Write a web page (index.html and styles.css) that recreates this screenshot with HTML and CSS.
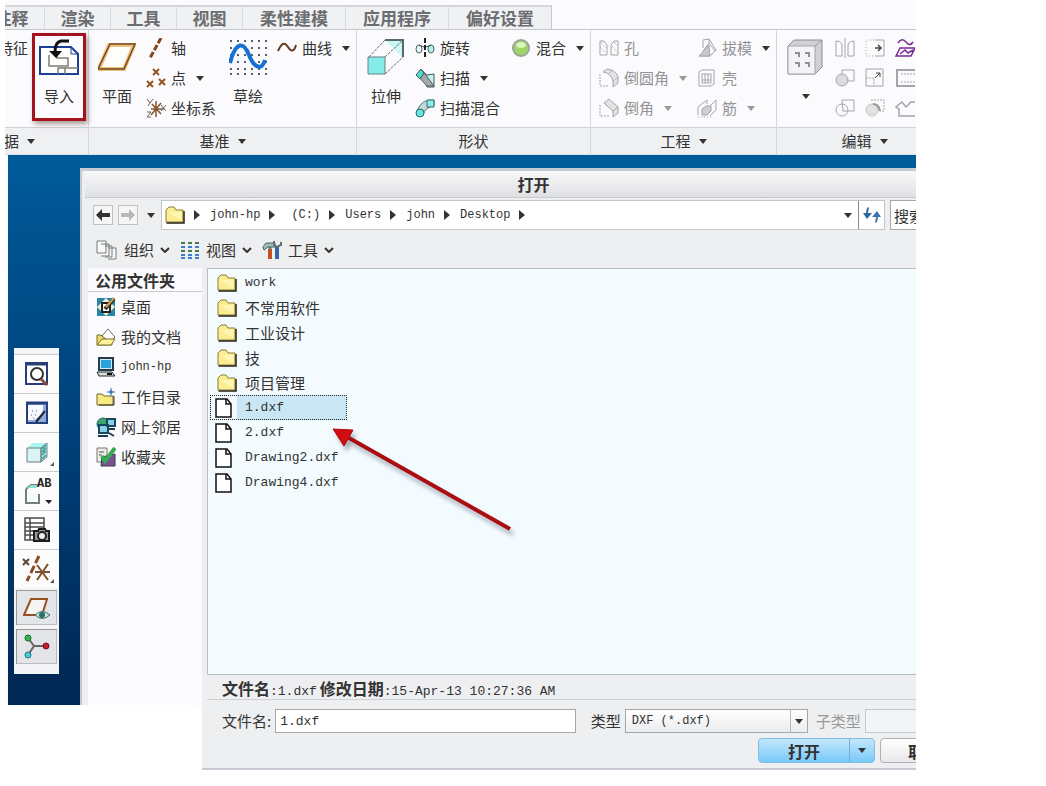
FILE: index.html
```html
<!DOCTYPE html>
<html lang="zh-CN">
<head>
<meta charset="utf-8">
<title>打开</title>
<link rel="stylesheet" href="styles.css">
</head>
<body>
<svg class="defs" aria-hidden="true">
  <symbol id="caret" viewBox="0 0 8 5"><path d="M0 0h8L4 5z" fill="currentColor"/></symbol>
  <symbol id="right" viewBox="0 0 6 10"><path d="M0 0l6 5-6 5z" fill="currentColor"/></symbol>
  <symbol id="chevron" viewBox="0 0 10 6"><path d="M1 1l4 4 4-4" fill="none" stroke="currentColor" stroke-width="2"/></symbol>
  <symbol id="folder" viewBox="0 0 20 18"><path d="M1 4l3-3h5l2 3h7v12H1z" fill="#fbed91" stroke="#8d7b34"/><path d="M3 6h13v8z" fill="#fff6b4"/><path d="M1.500 17h17.500V5" fill="none" stroke="#252214" stroke-width="1.500"/></symbol>
  <symbol id="file" viewBox="0 0 18 20"><path d="M1 1h11l4 5v13H1z" fill="#fff" stroke="#111" stroke-width="1.500"/><path d="M11 1v5h5" fill="none" stroke="#111" stroke-width="1.500"/></symbol>
</svg>
<div class="app">
  <nav class="tabs">
    <button>注释</button><button>渲染</button><button>工具</button><button>视图</button><button class="wide">柔性建模</button><button class="wide">应用程序</button><button class="wide">偏好设置</button>
  </nav>
  <div class="ribbon">
    <section class="group group-data">
      <div class="group-body">
        <button class="cmd">特征</button>
        <button class="big marked">
          <svg width="40" height="38" viewBox="0 0 40 38"><path d="M1 8h31l7 7v20H1z" fill="#fff" stroke="#1c3f96" stroke-width="2"/><path d="M32 8v7h7" fill="none" stroke="#1c3f96"/><path d="M10 16v11h19v-8H18v-3M19 35v-6h20M26 29v6" fill="none" stroke="#807c74" stroke-width="1.500"/><path d="M30 2H22q-6 1-6 11" fill="none" stroke="#111" stroke-width="3"/><path d="M10 12h13l-6 7z" fill="#111"/></svg>
          <span>导入</span>
        </button>
      </div>
      <h2>数据 <svg class="caret"><use href="#caret"/></svg></h2>
    </section>
    <section class="group group-datum">
      <div class="group-body">
        <button class="big">
          <svg width="38" height="38" viewBox="0 0 38 38"><path d="M11 6h25L26 30H1z" fill="#fdfdfb" stroke="#efbf7c" stroke-width="4"/><path d="M12 5h25L26 30H0z" fill="none" stroke="#6e4a20" stroke-width="1.500"/></svg>
          <span>平面</span>
        </button>
        <div class="stack">
          <button class="cmd"><svg width="20" height="20"><path d="M15 0L4 20" stroke="#84451c" stroke-width="3" stroke-dasharray="6 2"/></svg><span>轴</span></button>
          <button class="cmd"><svg width="20" height="20"><path d="M7 1l6 6m0-6l-6 6M1 13l6 6m0-6l-6 6M13 11l6 6m0-6l-6 6" stroke="#99521c" stroke-width="2"/></svg><span>点</span><svg class="caret"><use href="#caret"/></svg></button>
          <button class="cmd"><svg width="20" height="20"><path d="M5 11h13M10 3v16M6 6l9 10M15 5L5 17" stroke="#84552b" stroke-width="1.500"/><path d="M1 1l3 4 3-4M4 5L2 8M15 7l5 6m0-6l-5 6M1 14h4l-4 5h4" fill="none" stroke="#66625d"/></svg><span>坐标系</span></button>
        </div>
        <button class="big">
          <svg width="38" height="38" viewBox="0 0 38 38"><path d="M1 2h37M1 9h37M1 16h37M1 23h37M1 30h37M1 35h37" stroke="#52616e" stroke-width="2" stroke-dasharray="2 5"/><path d="M1 24C7 1 15 3 20 16s13 16 16 5" fill="none" stroke="#176fd4" stroke-width="4"/></svg>
          <span>草绘</span>
        </button>
        <div class="stack">
          <button class="cmd"><svg width="20" height="20"><path d="M1 13C5 4 8 4 11 9s6 5 8-2" fill="none" stroke="#633d20" stroke-width="2"/></svg><span>曲线</span><svg class="caret"><use href="#caret"/></svg></button>
        </div>
      </div>
      <h2>基准 <svg class="caret"><use href="#caret"/></svg></h2>
    </section>
    <section class="group group-shape">
      <div class="group-body">
        <button class="big">
          <svg width="38" height="38" viewBox="0 0 38 38"><path d="M18 1h18v18z" fill="#c9f7f6"/><path d="M2 18L18 1M18 18L36 1M18 35l18-17" fill="none" stroke="#60706e" stroke-dasharray="3 1"/><path d="M18 1h18v17" fill="none" stroke="#5a6967" stroke-width="2"/><path d="M1 18h17v17H1z" fill="#85ecea" stroke="#648180"/></svg>
          <span>拉伸</span>
        </button>
        <div class="stack">
          <button class="cmd"><svg width="20" height="20"><path d="M10 0v20" stroke="#222" stroke-width="2" stroke-dasharray="5 2"/><ellipse cx="4" cy="11" rx="3" ry="4" fill="#e2f9f8" stroke="#4d6260"/><ellipse cx="16" cy="11" rx="3" ry="4" fill="#aef1ef" stroke="#4d6260"/><path d="M4 7l5 2m7-2l-5 2" stroke="#444"/></svg><span>旋转</span></button>
          <button class="cmd"><svg width="20" height="20"><path d="M7 3l5 4 7-1v13H12z" fill="#c8f3f1" stroke="#3d5556"/><path d="M2 7l5-5 12 16h-7z" fill="#a3abaa" stroke="#4c5a59"/><path d="M1 7l5-6 3 4-4 6z" fill="#55d8d5" stroke="#3d5556"/></svg><span>扫描</span><svg class="caret"><use href="#caret"/></svg></button>
          <button class="cmd"><svg width="20" height="20"><path d="M2 13Q6 1 19 2v6q-9 1-11 9z" fill="#c4d7d7" stroke="#5b7373"/><circle cx="5" cy="15" r="4" fill="#69e3e3" stroke="#28696c"/><path d="M12 2h7v7h-7z" fill="#8cecea" stroke="#306f72"/></svg><span>扫描混合</span></button>
        </div>
        <div class="stack">
          <button class="cmd"><svg width="20" height="20"><circle cx="10" cy="10" r="8" fill="#9fd568" stroke="#9ba39a" stroke-width="2"/><ellipse cx="10" cy="7" rx="5" ry="3" fill="#d9f4bd"/></svg><span>混合</span><svg class="caret"><use href="#caret"/></svg></button>
        </div>
      </div>
      <h2>形状</h2>
    </section>
    <section class="group group-eng">
      <div class="group-body">
        <div class="stack off">
          <button class="cmd"><svg class="line" width="20" height="20"><path d="M1 3h4l3 4v10H1zM19 3h-4l-3 4v10h7z"/><path d="M1 9l6 6M2 4l5 6M13 8l6 7M15 4l4 4" stroke-dasharray="1 1"/></svg><span>孔</span></button>
          <button class="cmd"><svg class="line" width="20" height="20"><path d="M4 4l4-3q9 1 11 8v6l-5 4v-6Q12 5 4 4z" fill="#e3e3e5"/><path d="M14 13l5-4M10 5l4-3M1 6v12h9" stroke-dasharray="2 1"/></svg><span>倒圆角</span><svg class="caret"><use href="#caret"/></svg></button>
          <button class="cmd"><svg class="line" width="20" height="20"><path d="M5 5l5-4 9 8v6l-5 4v-6z" fill="#e3e3e5"/><path d="M14 13l5-4"/><path d="M1 7v11h9" stroke-dasharray="2 1"/></svg><span>倒角</span><svg class="caret"><use href="#caret"/></svg></button>
        </div>
        <div class="stack off">
          <button class="cmd"><svg class="line" width="20" height="20"><path d="M6 2l6-1 7 11-6 6H2M6 2v8M12 5l6 8M12 5l-6 8M12 5V1"/><path d="M2 18l10-11 1 11z" fill="#c9c9cc"/></svg><span>拔模</span><svg class="caret dark"><use href="#caret"/></svg></button>
          <button class="cmd"><svg class="line" width="20" height="20"><path d="M2 4l3-2h12v14l-3 2H2z"/><path d="M5 6h9v9H5zM8 6v9M11 6v9M5 12h9"/></svg><span>壳</span></button>
          <button class="cmd"><svg class="line" width="20" height="20"><path d="M1 17V9l9-7v4M13 8l6-6v10l-6 6"/><path d="M5 17v-6l4-3h5v5l-4 4z" fill="#cfcfd1"/><path d="M1 19h13" stroke-dasharray="1 2"/></svg><span>筋</span><svg class="caret"><use href="#caret"/></svg></button>
        </div>
      </div>
      <h2>工程 <svg class="caret"><use href="#caret"/></svg></h2>
    </section>
    <section class="group group-edit">
      <div class="group-body">
        <button class="big" aria-label="阵列">
          <svg width="38" height="38" viewBox="0 0 38 38"><path d="M1 7l6-6h28v27l-7 7H1z" fill="#d0d1d4" stroke="#898b8e"/><path d="M1 7h27v28H1z" fill="#f4f4f6" stroke="#a5a6a9"/><path d="M28 7l7-6" stroke="#999"/><path d="M8 14h4v4m6-4h4v4M8 24h4v4m6-4h4v4" fill="none" stroke="#8f9093" stroke-width="2"/></svg>
          <svg class="caret pattern-caret"><use href="#caret"/></svg>
        </button>
        <div class="tools">
          <button aria-label="镜像"><svg class="line" width="20" height="20"><path d="M10 0v20M1 3q6 0 6 5v10H1zM19 3q-6 0-6 5v10h6z"/></svg></button>
          <button aria-label="延伸"><svg class="line" width="20" height="20"><path d="M10 2h9v16h-9"/><path d="M9 2H1v16h8" stroke-dasharray="1 2"/><path d="M10 10h6m-3-3l3 3-3 3" stroke="#444" stroke-width="1.500"/></svg></button>
          <button aria-label="投影"><svg width="20" height="20" fill="none" stroke="#7a2a91" stroke-width="1.500"><path d="M3 5q4-6 8-1t7 0M1 18l4-8h15l-4 8zM5 16l5-4 3 3 5-3"/></svg></button>
          <button aria-label="合并"><svg class="line" width="20" height="20"><circle cx="7" cy="12" r="6" fill="#dcdcde"/><path d="M7 6V2h12v11h-6"/></svg></button>
          <button aria-label="偏移"><svg class="line" width="20" height="20"><path d="M1 1h17v17H1z"/><path d="M1 10h8v8" stroke-dasharray="2 1"/><path d="M10 10l5-5m-4 0h4v4" stroke="#444"/></svg></button>
          <button aria-label="加厚"><svg class="line" width="20" height="20"><path d="M20 2H2v16h18" stroke-width="2"/><path d="M6 6h14M6 14h14" stroke-dasharray="2 1"/></svg></button>
          <button aria-label="相交"><svg class="line" width="20" height="20"><circle cx="7" cy="12" r="6"/><path d="M7 2h12v11H8z"/></svg></button>
          <button aria-label="修剪"><svg class="line" width="20" height="20"><circle cx="7" cy="12" r="6" fill="#e2e2e4" stroke="#c6c6c8"/><path d="M6 2h13v11h-4M8 6q5 1 6 7" stroke-dasharray="2 1"/><path d="M8 6q6 0 7 7" stroke="#999" stroke-width="2"/></svg></button>
          <button aria-label="填充"><svg class="line" width="20" height="20"><path d="M20 4h-4l-5 5-4-5-6 5 3 2v7h16" stroke-width="1.500"/></svg></button>
        </div>
      </div>
      <h2>编辑 <svg class="caret"><use href="#caret"/></svg></h2>
    </section>
  </div>

  <main class="workspace">
    <aside class="rail">
      <div class="toolbox">
        <button aria-label="缩放"><svg width="26" height="26"><path d="M2 2h21v21H2z" fill="#fff" stroke="#263e76" stroke-width="2"/><path d="M1 3h23" stroke="#263e76" stroke-width="3"/><circle cx="13" cy="13" r="6" fill="#fff" stroke="#333" stroke-width="2"/><path d="M17 18l6 6" stroke="#8c5041" stroke-width="3"/></svg></button>
        <button aria-label="重画"><svg width="26" height="26"><path d="M3 3h20v20H3z" fill="#8facd9" stroke="#243f7b" stroke-width="2"/><path d="M4 5h15q2 9-9 15H4z" fill="#f6f9ff"/><path d="M2 3h22" stroke="#243f7b" stroke-width="3"/><path d="M12 22l5-6 4-5" stroke="#223" stroke-width="2"/><path d="M7 15h8M8 11h8M9 18h4" stroke="#567" stroke-dasharray="1 3"/></svg></button>
        <button class="more" aria-label="显示样式"><svg width="26" height="26"><path d="M3 9l6-5h14l-5 6H3z" fill="#abf4ef"/><path d="M3 9h14v14H3zM17 9l6-5v14l-6 5z" fill="#d9f4f3" stroke="#69807f"/><path d="M18 10l4-4M18 13l4-4M18 16l4-4M18 20l4-4" stroke="#48aaa8" stroke-width="2"/></svg></button>
        <button aria-label="注释显示"><svg width="32" height="30"><path d="M5 13l5-4h7M5 13v14h13v-9" fill="none" stroke="#71827e" stroke-width="2"/><path d="M6 12l4-3h7l-2 3z" fill="#8be1d7"/><text x="16" y="11" class="ab">AB</text><path d="M24 24h7l-3 4z" fill="#222"/></svg></button>
        <button aria-label="视图管理器"><svg width="28" height="28"><path d="M2 2h19v22H2zM7 2v22M2 7h19M2 11h19M2 15h19M2 19h19" fill="#fff" stroke="#494949" stroke-width="1.500"/><path d="M11 15h4l1-2h6l1 2h3v10H11z" fill="#9b9d9c" stroke="#1d1d1d" stroke-width="2"/><circle cx="19" cy="20" r="4" fill="#eee" stroke="#222" stroke-width="2"/></svg></button>
        <button class="more" aria-label="基准显示"><svg width="30" height="28"><path d="M1 4l6 6m0-6l-6 6" stroke="#5e4631" stroke-width="2"/><path d="M17 1L5 26" stroke="#8b4f24" stroke-width="3" stroke-dasharray="8 3"/><path d="M13 17h15M15 10l11 15M26 9L15 25" stroke="#7b512c" stroke-width="2"/></svg></button>
        <button class="pressed" aria-label="平面显示"><svg width="28" height="26"><path d="M8 4h16l-5 16H1z" fill="#f5f5f6" stroke="#965022" stroke-width="2"/><path d="M12 20q7-7 15 0-8 7-15 0" fill="#c9e3dd" stroke="#496a65"/><circle cx="19" cy="20" r="3" fill="#287369"/></svg></button>
        <button class="pressed" aria-label="旋转中心"><svg width="28" height="26"><path d="M5 4l6 8-6 9M11 12h12" fill="none" stroke="#666" stroke-width="2"/><circle cx="5" cy="4" r="3" fill="#31b84e" stroke="#176c2b"/><circle cx="23" cy="12" r="3" fill="#c51f2c" stroke="#701019"/><circle cx="5" cy="21" r="3" fill="#43cde1" stroke="#217383"/></svg></button>
      </div>
    </aside>
    <section class="dialog">
      <h1>打开</h1>
      <div class="nav">
        <button class="step" aria-label="后退"><svg width="14" height="12"><path d="M0 6l6-6v4h8v4H6v4z" fill="#333"/></svg></button>
        <button class="step" aria-label="前进"><svg width="14" height="12"><path d="M14 6L8 0v4H0v4h8v4z" fill="#b7b8b9"/></svg></button>
        <button class="history" aria-label="历史"><svg class="caret"><use href="#caret"/></svg></button>
        <div class="path">
          <svg width="20" height="18"><use href="#folder"/></svg>
          <svg class="right"><use href="#right"/></svg><a href="#">john-hp</a>
          <svg class="right"><use href="#right"/></svg><a class="drive" href="#">(C:)</a>
          <svg class="right"><use href="#right"/></svg><a href="#">Users</a>
          <svg class="right"><use href="#right"/></svg><a href="#">john</a>
          <svg class="right"><use href="#right"/></svg><a href="#">Desktop</a>
          <svg class="right"><use href="#right"/></svg>
          <button class="drop" aria-label="路径"><svg class="caret"><use href="#caret"/></svg></button>
          <button class="refresh" aria-label="刷新"><svg width="18" height="16"><path d="M6 0L5 6h4l-5 6-4-6h3l1-5z" fill="#2c679f"/><path d="M12 16l1-6H9l5-6 4 6h-3l-1 5z" fill="#3974ab"/></svg></button>
        </div>
        <input class="search" type="text" placeholder="搜索" aria-label="搜索">
      </div>
      <div class="toolbar">
        <button><svg width="22" height="20"><path d="M1 1h9v12H1zM5 4h8v12H5M9 6h7v11H9M12 8h8v11h-8" fill="#f8f8f8" stroke="#777a7b"/></svg>组织<svg class="chevron"><use href="#chevron"/></svg></button>
        <button><svg width="20" height="18" fill="none" stroke-width="2"><path d="M1 2h4M8 2h4M15 2h4M1 10h4M8 10h4M15 10h4" stroke="#4e7452"/><path d="M1 6h4M8 6h4M15 6h4M1 14h4M8 14h4M15 14h4M1 17h4M8 17h4M15 17h4" stroke="#3d7ed0"/></svg>视图<svg class="chevron"><use href="#chevron"/></svg></button>
        <button><svg width="20" height="20"><path d="M8 5v4" stroke="#6b8583" stroke-width="3"/><path d="M8 9v10" stroke="#c94f25" stroke-width="4"/><path d="M1 7l3-4h9v4H6l-4 3z" fill="#9fbdbb" stroke="#4b6261"/><path d="M15 7v12" stroke="#3268a8" stroke-width="4"/><path d="M12 1v4l3 2 4-2V2" fill="none" stroke="#597374" stroke-width="2"/></svg>工具<svg class="chevron"><use href="#chevron"/></svg></button>
      </div>
      <div class="content">
        <nav class="places">
          <h2>公用文件夹</h2>
          <a href="#"><svg width="20" height="20"><path d="M1 1h18v18H1z" fill="#2785a6"/><path d="M1 10l9-9 9 9-9 9z" fill="#e9efcf"/><path d="M6 6h8v9H6z" fill="#fff" stroke="#222" stroke-width="2"/><path d="M9 12L18 2" stroke="#333" stroke-width="4"/><path d="M10 10l8-9" stroke="#d8a04c" stroke-width="2"/></svg>桌面</a>
          <a href="#"><svg width="20" height="20"><path d="M1 18V8h4l2 2h9v8z" fill="#eada65" stroke="#786c2c"/><path d="M6 9l6-7 7 8-5 5z" fill="#fff" stroke="#6d6b61"/><path d="M1 18l5-6h13l-4 6z" fill="#fff29a" stroke="#78702d"/></svg>我的文档</a>
          <a href="#"><svg width="20" height="20"><path d="M3 1h14v12H3z" fill="#d4e7ee" stroke="#233b51" stroke-width="2"/><path d="M5 3h10v8H5z" fill="#2ba1df"/><path d="M1 15h15l3 4H3z" fill="#d9dcd9" stroke="#252a2d"/><path d="M11 17h5" stroke="#111" stroke-width="2"/></svg><span class="mono">john-hp</span></a>
          <a href="#"><svg width="20" height="20"><path d="M1 7h5l2 2h9v9H1z" fill="#f7e984" stroke="#70652b"/><path d="M18 9v9H3" fill="none" stroke="#39331c"/><path d="M15 0l1 4 4 1-4 1-1 4-1-4-4-1 4-1z" fill="#3a78bd"/></svg>工作目录</a>
          <a href="#"><svg width="20" height="20"><circle cx="7" cy="7" r="6" fill="#3ca56b" stroke="#205f70"/><path d="M11 2h8v7h-8zM3 8h9v8H3z" fill="#88cee5" stroke="#18455f" stroke-width="2"/><path d="M2 19h10M13 12h6M13 16l5 3" stroke="#183c54" stroke-width="2"/></svg>网上邻居</a>
          <a href="#"><svg width="20" height="20"><path d="M1 1h10v14H1z" fill="#eeeee9" stroke="#777"/><path d="M6 10l13-3v12H5z" fill="#77548f" stroke="#403644"/><path d="M19 1L9 14l-3-5" fill="none" stroke="#34aa55" stroke-width="4"/><path d="M3 5h5M3 8h3" stroke="#555"/></svg>收藏夹</a>
        </nav>
        <div class="browser">
          <div class="files">
            <ul>
              <li><button><svg class="type"><use href="#folder"/></svg><span class="mono">work</span></button></li>
              <li><button><svg class="type"><use href="#folder"/></svg><span>不常用软件</span></button></li>
              <li><button><svg class="type"><use href="#folder"/></svg><span>工业设计</span></button></li>
              <li><button><svg class="type"><use href="#folder"/></svg><span>技</span></button></li>
              <li><button><svg class="type"><use href="#folder"/></svg><span>项目管理</span></button></li>
              <li><button class="doc selected"><svg class="type"><use href="#file"/></svg><span class="mono">1.dxf</span></button></li>
              <li><button class="doc"><svg class="type"><use href="#file"/></svg><span class="mono">2.dxf</span></button></li>
              <li><button class="doc"><svg class="type"><use href="#file"/></svg><span class="mono">Drawing2.dxf</span></button></li>
              <li><button class="doc"><svg class="type"><use href="#file"/></svg><span class="mono">Drawing4.dxf</span></button></li>
            </ul>
            <svg class="pointer" width="190" height="116" viewBox="0 0 190 116"><path d="M14 10L182 105" stroke="#a90f12" stroke-width="4"/><path d="M5 5l20 1-9 16z" fill="#d20d10" stroke="#b00d10"/></svg>
          </div>
          <p class="status"><b>文件名</b><span class="mono">:1.dxf</span> <b>修改日期</b><span class="mono">:15-Apr-13 10:27:36 AM</span></p>
          <form class="form">
            <div class="fields">
              <label for="name">文件名:</label><input id="name" class="name" type="text" value="1.dxf">
              <label for="type">类型</label>
              <div class="select"><select id="type"><option>DXF (*.dxf)</option></select><i><svg class="caret"><use href="#caret"/></svg></i></div>
              <label class="dim" for="subtype">子类型</label><input id="subtype" class="subtype" type="text" disabled>
            </div>
            <div class="actions">
              <div class="split"><button type="button">打开</button><button type="button" class="split-drop" aria-label="打开选项"><svg class="caret"><use href="#caret"/></svg></button></div>
              <button type="button" class="cancel">取消</button>
            </div>
          </form>
        </div>
      </div>
    </section>
    <div class="blank"></div>
  </main>
</div>
</body>
</html>
```
FILE: styles.css
```css
* { box-sizing: border-box; }
body { margin: 0; background: #fff; color: #333; font: 15px/20px "Noto Sans CJK SC", sans-serif; }
button { display: flex; align-items: center; margin: 0; padding: 0; border: 0; background: none; color: inherit; font: inherit; white-space: nowrap; }
input, select { min-width: 0; margin: 0; border: 1px solid #a5a8ab; border-radius: 0; background: #fff; color: #333; font: 12px "Liberation Mono", "Noto Sans CJK SC", monospace; }
a { color: inherit; text-decoration: none; }
h1, h2, p, ul { margin: 0; padding: 0; font: inherit; list-style: none; }
svg { flex: none; display: block; }
.defs { position: absolute; width: 0; height: 0; }
.mono { font-family: "Liberation Mono", monospace; font-size: 13px; }
.caret { width: 8px; height: 5px; color: #333; }
.right { width: 6px; height: 10px; color: #333; }
.chevron { width: 10px; height: 6px; color: #333; }

.app { margin: 0 130px 0 5px; overflow: hidden; background: #fbfbfd; }
.tabs { display: flex; padding-top: 5px; border-bottom: 1px solid #c5c7c9; }
.tabs button { flex: none; justify-content: center; width: 66px; height: 24px; border-top: 2px solid #d5d6d8; border-right: 1px solid #d8d9db; background: #f0f1f3; color: #6b6d70; font-size: 17px; line-height: 20px; font-weight: bold; }
.tabs button:first-child { margin-left: -26px; }
.tabs .wide { width: 103px; }
.tabs .wide:last-child { border-right-color: #c5c7c9; }

.ribbon { display: flex; border-bottom: 1px solid #d9e5ed; }
.group { flex: none; border-right: 1px solid #d5d6d8; }
.group-body { display: grid; gap: 10px; height: 97px; padding: 3px 0 0 9px; }
.group > h2 { display: flex; align-items: center; justify-content: center; gap: 8px; height: 27px; border-top: 1px solid #cfd1d3; background: #eff0f2; }
.group-data { width: 153px; margin-left: -69px; }
.group-data .group-body { display: flex; justify-content: flex-end; align-items: flex-start; gap: 4px; padding-right: 2px; }
.group-datum { width: 268px; }
.group-datum .group-body { grid-template-columns: 38px 73px 38px 1fr; }
.group-shape { width: 234px; }
.group-shape .group-body { grid-template-columns: 38px 86px 1fr; padding-left: 10px; }
.group-eng { width: 186px; }
.group-eng .group-body { grid-template-columns: 88px 1fr; padding-left: 8px; }
.group-edit { width: 176px; }
.group-edit .group-body { grid-template-columns: 38px 1fr; padding-left: 10px; }
.cmd { gap: 5px; height: 30px; }
.cmd .caret { margin-left: 5px; }
.off { color: #929496; }
.off .caret { color: #999; }
.off .caret.dark { color: #333; }
.line { fill: none; stroke: #a4a5a8; }
.big { flex-direction: column; align-self: start; gap: 9px; height: 88px; padding-top: 6px; }
.marked { width: 54px; border: 3px solid #a3131b; padding-top: 3px; box-shadow: 2px 3px 5px #a99; }
.pattern-caret { margin-top: 8px; }
.tools { display: grid; grid-template-columns: repeat(3, 20px); grid-auto-rows: 30px; column-gap: 10px; }

.workspace { position: relative; display: flex; padding-left: 3px; }
.rail { flex: none; width: 72px; padding: 193px 0 0 6px; background: linear-gradient(#005b99, #00407a 45%, #002956 85%); }
.toolbox { width: 45px; padding: 6px 0 8px; background: #f3f5f8; }
.toolbox button { position: relative; justify-content: center; width: 45px; height: 39px; border-top: 1px solid #c9cccf; background: #fcfcfd; }
.more::after { content: ""; position: absolute; right: 5px; bottom: 5px; border: 2px solid #555; border-top-color: transparent; border-left-color: transparent; }
.toolbox .pressed { border: 2px solid #f4f4f6; background: #e4e5e8; box-shadow: inset 1px 1px #999, inset -1px -1px #bbb; }
.ab { font: bold 12px "Liberation Mono", monospace; fill: #222; }

.dialog { flex: none; display: flex; flex-direction: column; width: calc(100% - 6px); margin-top: 13px; border: solid #c6cbd3; border-width: 3px 0 2px 2px; background: #eeeff1; }
.workspace::before { content: ""; position: absolute; left: 75px; right: 0; top: 0; height: 13px; background: #005b99; }
.dialog > h1 { height: 27px; border-bottom: 1px solid #c7c9cc; background: linear-gradient(#f8f8f9, #dfe0e2); font-size: 16px; line-height: 26px; font-weight: bold; text-align: center; margin-left: 3px; }
.nav { display: flex; align-items: center; gap: 5px; padding: 0 14px 0 11px; height: 34px; }
.step { justify-content: center; width: 20px; height: 20px; border: 1px solid #bfc1c4; background: #f6f6f7; }
.step + .step { margin-right: 2px; }
.history { justify-content: center; width: 11px; }
.path { flex: 1; display: flex; align-items: center; height: 30px; padding-left: 3px; border: 1px solid #c2c4c7; background: #fff; font-family: "Liberation Mono", monospace; font-size: 12px; }
.path .right { margin: 0 10px 0 9px; }
.path .drive { margin-left: 6px; }
.drop { justify-content: center; width: 20px; height: 28px; margin-left: auto; }
.refresh { justify-content: center; width: 26px; height: 28px; border-left: 1px solid #888; }
.search { width: 78px; height: 30px; padding: 0 3px; font: 15px "Noto Sans CJK SC", sans-serif; }
.search::placeholder { color: #333; opacity: 1; }
.toolbar { display: flex; align-items: center; gap: 10px; height: 36px; padding-left: 14px; }
.toolbar button { gap: 6px; }
.content { display: flex; }
.places { flex: none; width: 114px; margin-left: 6px; background: #fbfbfd; }
.places h2 { height: 24px; padding-left: 7px; border-bottom: 1px solid #c9cbce; font-size: 16px; line-height: 24px; font-weight: bold; }
.places a { display: flex; align-items: center; gap: 5px; height: 30px; padding-left: 8px; white-space: nowrap; }
.places .mono { font-size: 12px; }
.browser { flex: 1; min-width: 0; margin-left: 5px; }
.files { position: relative; height: 407px; padding: 1px 0 0 2px; border: solid #b9bdc1; border-width: 1px 0 1px 1px; background: #f4fbff; }
.files button { gap: 8px; width: 137px; height: 25px; padding-left: 7px; }
.type { width: 20px; height: 18px; }
.files .doc { gap: 12px; padding-left: 5px; }
.doc .type { width: 18px; height: 20px; }
.files .selected { border: 1px dotted #222; padding-left: 4px; background: linear-gradient(90deg, #f4fbff 26px, #c9e6f4 26px); }
.pointer { position: absolute; left: 120px; top: 155px; filter: drop-shadow(3px 5px 2px #aab5bd); }
.status { height: 25px; padding-left: 15px; border-bottom: 1px solid #cfd1d4; line-height: 26px; white-space: nowrap; font-size: 13px; }
.status b { font-size: 16px; }
.form { padding: 9px 14px 5px 15px; }
.fields { display: flex; align-items: center; gap: 4px; }
.fields label { flex: none; }
.fields input, .select { height: 24px; }
.fields input { padding: 0 4px; }
.fields .name { flex: 302 1 0; margin-right: 11px; font-size: 13px; }
.select { position: relative; flex: 190 1 0; margin-right: 4px; }
.select select { display: block; width: 100%; height: 24px; padding: 0 6px; appearance: none; background: linear-gradient(#fff, #ebecee); }
.select i { position: absolute; right: 0; top: 0; display: grid; place-items: center; width: 18px; height: 24px; border-left: 1px solid #b7babd; pointer-events: none; }
.dim { color: #97999b; }
.fields .subtype { flex: 97 1 0; border-color: #c5c7c9; background: #f3f4f5; }
.actions { display: flex; justify-content: flex-end; gap: 5px; margin-top: 5px; font-size: 16px; font-weight: bold; }
.split { display: flex; width: 117px; height: 25px; border: 1px solid #83bee2; border-radius: 4px; background: linear-gradient(#c1e7fb, #79c9f8); }
.split button { flex: 1; justify-content: center; }
.split .split-drop { flex: none; width: 25px; border-left: 1px solid #75aed1; }
.cancel { justify-content: center; width: 88px; height: 25px; border: 1px solid #aeb0b4; border-radius: 4px; background: linear-gradient(#fff, #e8e8ea); }
.blank { position: absolute; left: 0; bottom: 0; width: 197px; height: 65px; border-radius: 0 10px 0 0; background: #fff; }
```
